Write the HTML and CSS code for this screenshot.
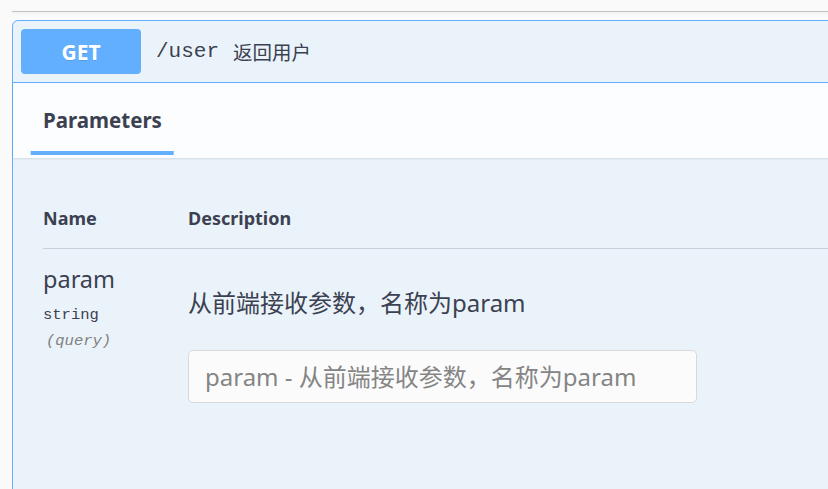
FILE: index.html
```html
<!DOCTYPE html>
<html lang="zh-CN">
<head>
<meta charset="utf-8">
<title>Swagger</title>
<link rel="stylesheet" href="styles.css">
</head>
<body>
<div class="page">
  <div class="tag-line"></div>
  <div class="opblock">
    <div class="summary">
      <span class="method">GET</span>
      <span class="path">/user</span>
      <span class="summary-desc">返回用户</span>
    </div>
    <div class="section-header">
      <div class="tab-item">
        <h4 class="tab-title"><span class="tab-label">Parameters</span></h4>
      </div>
    </div>
    <div class="table-container">
      <table class="params">
        <thead>
          <tr>
            <th class="col-name">Name</th>
            <th class="col-desc">Description</th>
          </tr>
        </thead>
        <tbody>
          <tr>
            <td class="col-name">
              <div class="param-name">param</div>
              <div class="param-type">string</div>
              <div class="param-in">(query)</div>
            </td>
            <td class="col-desc">
              <p class="param-desc">从前端接收参数，名称为param</p>
              <input class="param-input" type="text" placeholder="param - 从前端接收参数，名称为param">
            </td>
          </tr>
        </tbody>
      </table>
    </div>
  </div>
</div>
</body>
</html>
```
FILE: styles.css
```css
html, body {
  margin: 0;
  padding: 0;
}
body {
  background: #fafafa;
  width: 828px;
  height: 489px;
  overflow: hidden;
  font-family: "Noto Sans", "Noto Sans CJK SC", sans-serif;
  color: #3b4151;
}
.page {
  padding-left: 12px;
}
.tag-line {
  margin-top: 11px;
  height: 1px;
  width: 900px;
  background: #c2c2c2;
  box-shadow: 0 1px 3px rgba(0, 0, 0, 0.1);
}
.opblock {
  margin-top: 8px;
  width: 900px;
  height: 600px;
  border: 1px solid #61affe;
  border-radius: 6px;
  background: #ebf3fa;
}
.summary {
  display: flex;
  align-items: center;
  padding: 8px;
  border-bottom: 1px solid #61affe;
}
.method {
  width: 120px;
  height: 45px;
  display: flex;
  align-items: center;
  justify-content: center;
  background: #61affe;
  border-radius: 4px;
  color: #fff;
  font-weight: 700;
  font-size: 21px;
  text-shadow: 0 1px 0 rgba(0, 0, 0, 0.1);
}
.path {
  margin-left: 15px;
  font-family: "Liberation Mono", monospace;
  font-size: 21px;
  color: #3b4151;
}
.summary-desc {
  margin-left: 14px;
  font-family: "Noto Sans CJK SC", sans-serif;
  font-size: 19.5px;
  color: #3b4151;
}
.section-header {
  height: 75px;
  display: flex;
  align-items: center;
  padding: 0 30px;
  background: rgba(255, 255, 255, 0.8);
  box-shadow: 0 1px 2px rgba(0, 0, 0, 0.1);
}
.tab-title {
  margin: 0;
  font-size: 20.5px;
  line-height: 29px;
  font-weight: 700;
  color: #3b4151;
}
.tab-label {
  position: relative;
  display: inline-block;
}
.tab-label::after {
  content: "";
  position: absolute;
  left: 50%;
  bottom: -20px;
  width: 120%;
  height: 4px;
  transform: translateX(-50%);
  background: #61affe;
}
.table-container {
  padding: 30px;
}
.params {
  width: 860px;
  border-collapse: collapse;
  table-layout: fixed;
}
.params th {
  padding: 18px 0;
  text-align: left;
  font-size: 18px;
  line-height: 24px;
  font-weight: 700;
  border-bottom: 1px solid #c9cfd8;
}
.params th.col-name,
.params td.col-name {
  width: 145px;
}
.params td {
  padding: 15px 0;
  vertical-align: top;
}
.param-name {
  font-size: 23.5px;
  line-height: 31px;
}
.param-type {
  margin-top: 7px;
  font-family: "Liberation Mono", monospace;
  font-size: 15.5px;
  line-height: 26px;
}
.param-in {
  padding-left: 3px;
  font-family: "Liberation Mono", monospace;
  font-style: italic;
  font-size: 15.5px;
  line-height: 26px;
  color: #808080;
}
.param-desc {
  margin: 23px 0 0;
  font-size: 24px;
  line-height: 31px;
}
.param-input {
  display: block;
  box-sizing: border-box;
  margin-top: 32px;
  width: 509px;
  height: 53px;
  padding: 0 16px;
  border: 1px solid #d9d9d9;
  border-radius: 5px;
  background: #fbfbfb;
  font-family: "Noto Sans", "Noto Sans CJK SC", sans-serif;
  font-size: 24px;
  color: #3b4151;
  outline: none;
}
.param-input::placeholder {
  color: #858585;
}
```
